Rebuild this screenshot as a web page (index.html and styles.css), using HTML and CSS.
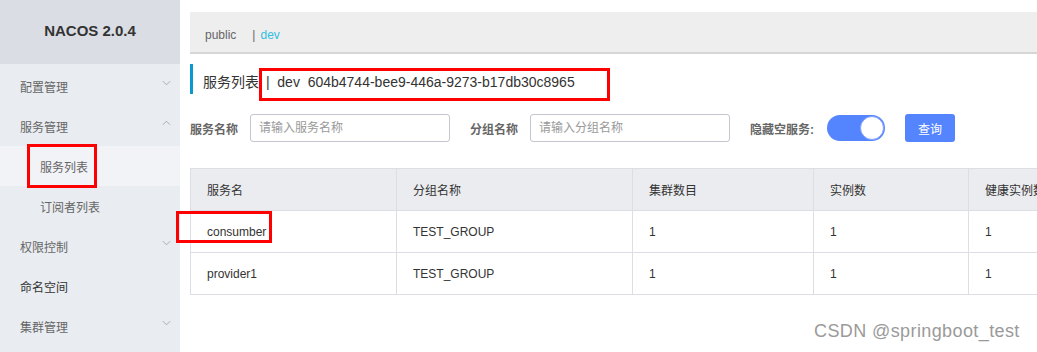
FILE: index.html
```html
<!DOCTYPE html>
<html lang="zh">
<head>
<meta charset="utf-8">
<title>Nacos</title>
<link rel="stylesheet" href="styles.css">
</head>
<body>
<div class="app">
  <aside class="sidebar">
    <div class="brand">NACOS 2.0.4</div>
    <ul class="menu">
      <li class="item"><span>配置管理</span><svg class="chev" viewBox="0 0 10 6"><polyline points="1,1 5,5 9,1"/></svg></li>
      <li class="item"><span>服务管理</span><svg class="chev" viewBox="0 0 10 6"><polyline points="1,5 5,1 9,5"/></svg></li>
      <li class="item sub selected"><span class="mark">服务列表</span></li>
      <li class="item sub"><span>订阅者列表</span></li>
      <li class="item"><span>权限控制</span><svg class="chev" viewBox="0 0 10 6"><polyline points="1,1 5,5 9,1"/></svg></li>
      <li class="item dark"><span>命名空间</span></li>
      <li class="item"><span>集群管理</span><svg class="chev" viewBox="0 0 10 6"><polyline points="1,1 5,5 9,1"/></svg></li>
    </ul>
  </aside>
  <main class="main">
    <div class="nsbar"><span class="ns">public</span><span class="sep">|</span><span class="ns active">dev</span></div>
    <h1 class="title">服务列表<span class="hl">&nbsp;|&nbsp;&nbsp;dev&nbsp;&nbsp;604b4744-bee9-446a-9273-b17db30c8965</span></h1>
    <form class="filters">
      <label class="lbl">服务名称</label>
      <input class="inp" placeholder="请输入服务名称">
      <label class="lbl">分组名称</label>
      <input class="inp" placeholder="请输入分组名称">
      <label class="lbl">隐藏空服务:</label>
      <span class="switch"><span class="knob"></span></span>
      <button type="button" class="btn">查询</button>
    </form>
    <table class="grid">
      <colgroup>
        <col class="c1"><col class="c2"><col class="c3"><col class="c4"><col class="c5">
      </colgroup>
      <thead>
        <tr><th>服务名</th><th>分组名称</th><th>集群数目</th><th>实例数</th><th>健康实例数</th></tr>
      </thead>
      <tbody>
        <tr><td><span class="mark2">consumber</span></td><td>TEST_GROUP</td><td>1</td><td>1</td><td>1</td></tr>
        <tr><td>provider1</td><td>TEST_GROUP</td><td>1</td><td>1</td><td>1</td></tr>
      </tbody>
    </table>
    <div class="watermark">CSDN @springboot_test</div>
  </main>
</div>
</body>
</html>
```

FILE: styles.css
```css
*, *::before, *::after { box-sizing: border-box; }
html, body { margin: 0; padding: 0; }
body {
  font-family: "Liberation Sans", "Noto Sans CJK SC", sans-serif;
  font-size: 12px;
  color: #333;
  background: #fff;
  width: 1037px;
  height: 352px;
  overflow: hidden;
}
.app { display: flex; height: 352px; }

.sidebar { width: 180px; flex: none; background: #e9ecf0; }
.brand {
  height: 64px;
  background: #dadde3;
  display: flex; align-items: center; justify-content: center;
  font-weight: bold; font-size: 15px; color: #333;
  padding-bottom: 3px;
}
.menu { list-style: none; margin: 0; padding: 2px 0 0; }
.item {
  height: 40px;
  display: flex; align-items: center; justify-content: space-between;
  padding: 0 9px 0 20px;
  color: #666; font-size: 12px;
}
.item.sub { padding-left: 40px; }
.item.selected { background: #f2f3f7; }
.item.dark { color: #333; }
.chev { width: 9px; height: 6px; fill: none; stroke: #a3a6ab; stroke-width: 1; margin-top: -6px; }
.mark { position: relative; }
.mark::after {
  content: ""; position: absolute;
  left: -13px; top: -14px; width: 70px; height: 44px;
  border: 3px solid #f00;
}

.main { flex: 1; min-width: 0; position: relative; padding: 12px 0 0 10px; }
.nsbar {
  height: 42px;
  background: #eee;
  border-bottom: 2px solid #d6d6d6;
  display: flex; align-items: center;
  padding-left: 15px; padding-top: 5px;
  font-size: 12px; color: #666;
}
.nsbar .sep { margin: 0 5px 0 16px; color: #666; }
.nsbar .active { color: #33bde0; }

.title {
  margin: 10px 0 0; height: 30px; line-height: 30px;
  border-left: 3px solid #0b98cf;
  padding: 3px 0 0 10px;
  font-size: 14px; font-weight: normal; color: #333;
  white-space: nowrap;
}
.hl {
  display: inline-block; vertical-align: top;
  border: 3px solid #f00;
  height: 33px; line-height: 23px;
  margin-top: 1px;
  width: 351px;
}

.filters { margin-top: 20px; display: flex; align-items: center; height: 28px; }
.lbl { font-weight: bold; color: #666; font-size: 12px; margin-right: 12px; }
.inp {
  width: 200px; height: 28px;
  border: 1px solid #c4c6cf; border-radius: 3px;
  padding: 0 8px; font: inherit; font-size: 12px;
  margin-right: 20px; outline: none;
}
.inp::placeholder { color: #999; }
.lbl:nth-of-type(3) { margin-right: 13px; }
.switch {
  width: 58px; height: 26px; border-radius: 13px;
  background: #5584ff; display: flex; align-items: center; justify-content: flex-end;
  padding-right: 1px; margin-right: 20px;
}
.knob { width: 24px; height: 24px; border-radius: 50%; background: #fff; border: 1px solid #7fa0ff; }
.btn {
  width: 50px; height: 28px; border: none; border-radius: 3px;
  background: #5584ff; color: #fff; font: inherit; font-size: 12px; padding: 0;
}

.grid {
  margin-top: 26px;
  border-collapse: collapse; table-layout: fixed; width: 100%;
}
.c1 { width: 206px; }
.c2 { width: 236px; }
.c3 { width: 181px; }
.c4 { width: 155px; }
.grid th, .grid td {
  height: 42px; border: 1px solid #dcdee3;
  text-align: left; padding: 0 16px; font-weight: normal; color: #333; font-size: 12px;
  white-space: nowrap; overflow: hidden;
}
.grid th:last-child, .grid td:last-child { padding-right: 0; border-right: none; text-overflow: clip; }
.grid th { background: #ebecf0; }
.grid td:first-child { overflow: visible; }
.mark2 { position: relative; }
.mark2::after {
  content: ""; position: absolute;
  left: -31px; top: -14px; width: 96px; height: 32px;
  border: 3px solid #f00;
}

.watermark {
  position: absolute; left: 634px; top: 321px;
  font-family: "Liberation Sans", sans-serif; font-size: 18px; letter-spacing: 0.4px;
  color: #9a9a9a; text-shadow: 0 0 1px #fff;
}
```
